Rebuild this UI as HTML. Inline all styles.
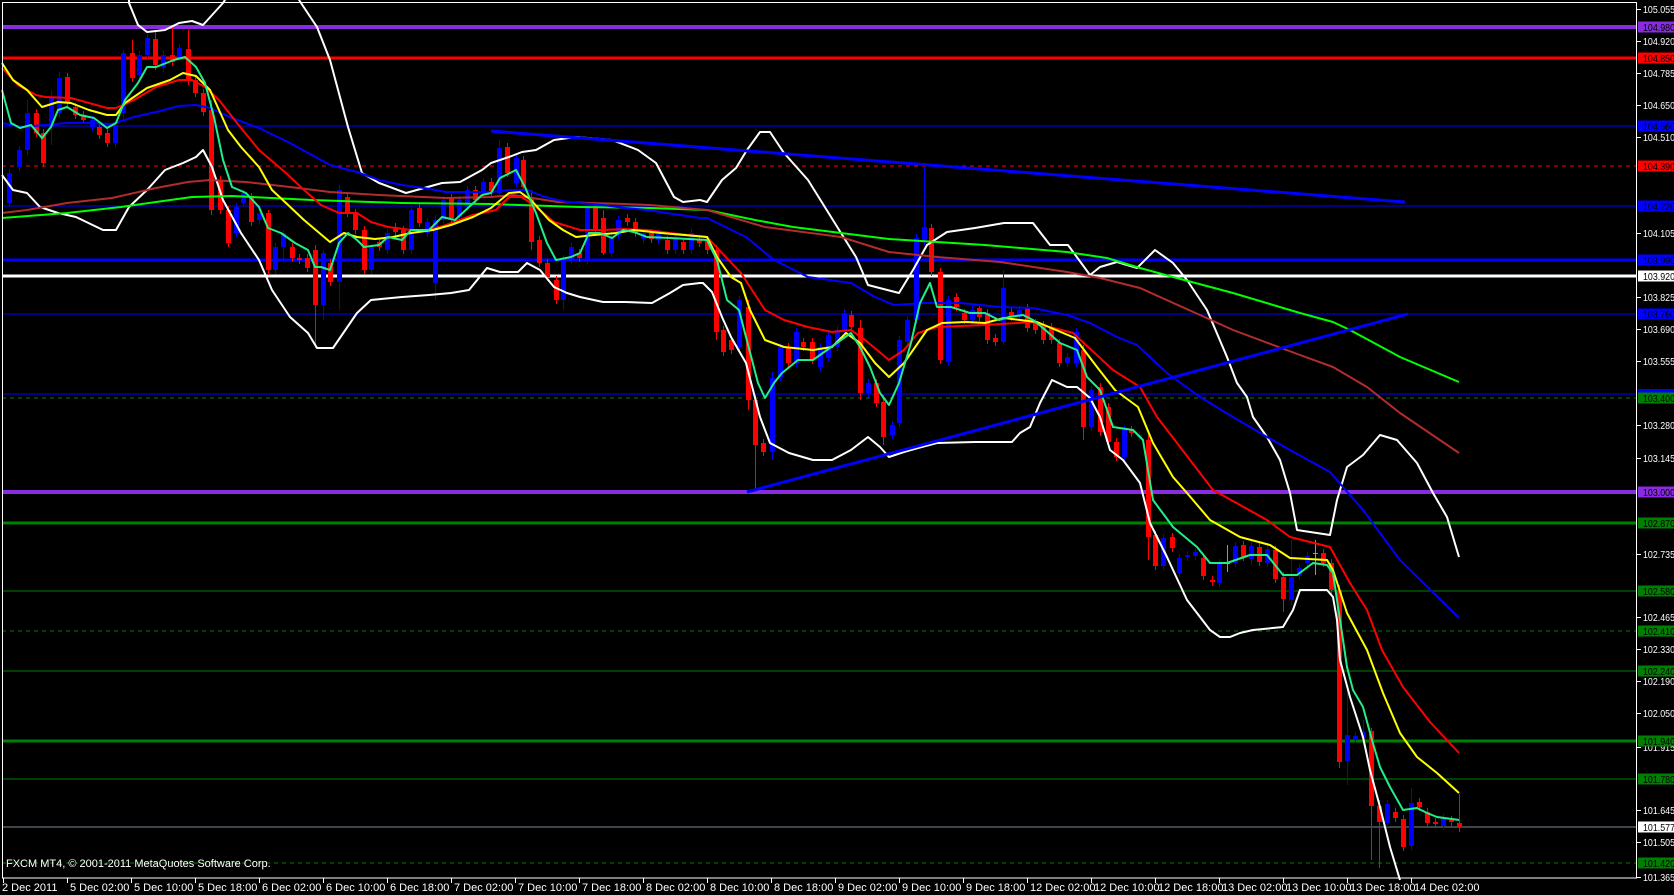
<!DOCTYPE html>
<html><head><meta charset="utf-8"><style>
html,body{margin:0;padding:0;background:#000;width:1674px;height:895px;overflow:hidden}
svg{display:block}
text{font-family:"Liberation Sans",sans-serif;font-size:11px;fill:#fff}
text.p{font-size:10.5px}
</style></head><body>
<svg id="s" width="1674" height="895" viewBox="0 0 1674 895" xmlns="http://www.w3.org/2000/svg">
<rect width="1674" height="895" fill="#000"/>
<g id="hl"></g>
<g id="cd"></g>
<g id="ma" fill="none" stroke-linejoin="round"></g>
<g id="ax"></g>
<text x="6" y="867">FXCM MT4, © 2001-2011 MetaQuotes Software Corp.</text>
</svg>
<script>
var NS="http://www.w3.org/2000/svg";
function el(p,t,a,txt){var e=document.createElementNS(NS,t);for(var k in a)e.setAttribute(k,a[k]);if(txt!=null)e.textContent=txt;document.getElementById(p).appendChild(e);return e;}
var H=[[27,"#8a2be2",4,0],[58,"#ff0000",3,0],[126,"#0000ff",1,0],[166,"#ff0000",1,1],[206,"#0000ff",1,0],[260,"#0000ff",3,0],[276,"#ffffff",3,0],[314,"#0000ff",1,0],[394,"#0000ff",1,0],[398,"#008000",1,1],[492,"#8a2be2",4,0],[523,"#008000",3,0],[591,"#008000",1,0],[631,"#008000",1,1],[671,"#008000",1,0],[741,"#008000",3,0],[779,"#008000",1,0],[827,"#778899",1,0],[863,"#008000",1,1]];
H.forEach(function(h){var a={x1:2,x2:1637,y1:h[0],y2:h[0],stroke:h[1],"stroke-width":h[2]};if(h[3])a["stroke-dasharray"]="4,4";el("hl","line",a);});
var C=[[9,173,203,'b'],[19,150,167,'b'],[27,113,150,'b'],[36,113,133,'r'],[43,133,163,'r'],[51,97,127,'b'],[59,78,113,'b'],[67,77,103,'r'],[75,107,115,'r'],[83,115,120,'r'],[92,120,127,'b'],[99,127,135,'r'],[107,133,143,'r'],[115,125,143,'b'],[123,53,113,'b'],[132,53,78,'r'],[139,55,75,'b'],[147,38,55,'b'],[155,39,65,'r'],[163,55,68,'b'],[172,55,62,'r'],[179,48,57,'b'],[188,49,80,'r'],[195,80,93,'r'],[203,93,112,'r'],[211,110,210,'r'],[220,180,210,'r'],[228,210,243,'r'],[236,207,233,'b'],[243,193,203,'b'],[251,197,222,'r'],[259,213,220,'b'],[268,213,270,'r'],[275,247,270,'b'],[283,233,247,'b'],[292,247,258,'r'],[299,258,260,'r'],[307,258,268,'r'],[315,250,305,'r'],[323,253,305,'b'],[330,263,282,'r'],[339,190,282,'b'],[347,197,213,'r'],[355,213,230,'r'],[364,230,270,'r'],[371,248,270,'b'],[379,242,247,'r'],[387,233,250,'b'],[395,227,232,'r'],[403,230,250,'r'],[411,210,250,'b'],[419,208,223,'r'],[427,222,233,'b'],[435,220,283,'b'],[443,200,220,'b'],[451,198,218,'r'],[459,200,217,'b'],[467,190,207,'b'],[475,190,200,'r'],[483,182,193,'b'],[491,182,193,'r'],[499,148,193,'b'],[507,147,173,'r'],[516,158,183,'b'],[523,160,187,'r'],[531,197,242,'r'],[539,240,263,'r'],[547,263,277,'r'],[556,280,300,'r'],[563,260,300,'b'],[571,247,260,'b'],[579,253,258,'r'],[587,208,260,'b'],[595,208,230,'r'],[603,218,253,'r'],[611,238,253,'b'],[618,220,235,'b'],[627,218,222,'r'],[635,222,233,'r'],[643,233,239,'b'],[651,233,239,'r'],[658,233,240,'b'],[667,240,250,'r'],[675,238,250,'b'],[683,242,250,'r'],[691,233,250,'b'],[699,240,243,'r'],[707,240,250,'r'],[716,250,332,'r'],[723,330,352,'r'],[731,340,350,'r'],[739,300,347,'b'],[748,307,400,'r'],[755,400,445,'r'],[763,443,452,'r'],[772,378,452,'b'],[780,347,377,'b'],[788,347,363,'r'],[796,332,363,'b'],[803,342,347,'r'],[812,342,360,'r'],[820,347,367,'b'],[828,335,358,'b'],[837,330,347,'b'],[844,313,330,'b'],[851,315,327,'r'],[860,328,393,'r'],[868,383,393,'b'],[876,383,403,'r'],[883,402,437,'r'],[892,425,435,'b'],[899,340,423,'b'],[907,320,342,'b'],[916,238,320,'b'],[924,227,240,'b'],[931,228,272,'r'],[940,272,360,'r'],[948,300,362,'b'],[956,297,307,'r'],[964,313,320,'r'],[972,310,320,'b'],[979,308,317,'r'],[987,313,340,'r'],[995,338,342,'r'],[1003,288,342,'b'],[1011,312,317,'r'],[1019,310,317,'b'],[1027,308,328,'r'],[1035,323,330,'r'],[1043,325,340,'r'],[1051,327,340,'r'],[1059,343,363,'r'],[1067,357,363,'b'],[1076,332,363,'b'],[1083,350,427,'r'],[1091,390,427,'b'],[1100,387,432,'r'],[1108,407,442,'r'],[1116,442,457,'r'],[1124,430,457,'b'],[1131,430,433,'r'],[1139,435,437,'b'],[1148,440,537,'r'],[1155,535,566,'r'],[1163,538,566,'b'],[1172,537,548,'r'],[1179,558,573,'b'],[1187,555,557,'b'],[1195,552,556,'b'],[1203,558,576,'r'],[1212,580,582,'r'],[1219,563,583,'b'],[1227,563,564,'g'],[1235,546,563,'b'],[1243,545,557,'r'],[1251,546,559,'b'],[1259,547,562,'r'],[1267,549,563,'b'],[1275,550,579,'r'],[1283,577,599,'r'],[1291,577,600,'b'],[1299,568,576,'b'],[1307,556,563,'b'],[1315,553,554,'g'],[1323,553,563,'r'],[1331,563,590,'r'],[1339,590,762,'r'],[1347,735,761,'b'],[1355,736,739,'b'],[1363,732,738,'b'],[1371,731,806,'r'],[1379,806,822,'r'],[1387,804,823,'b'],[1395,812,818,'r'],[1403,819,847,'r'],[1411,803,846,'b'],[1419,802,807,'r'],[1427,812,823,'r'],[1435,822,824,'r'],[1443,818,826,'b'],[1451,820,822,'r'],[1459,823,827,'r']];
var W={211:[100,215],315:[245,348],924:[167,245],755:[395,490],339:[185,310],435:[215,300],1339:[585,768],1347:[690,785],1363:[720,745],1371:[728,860],1379:[800,868],1411:[788,850],1459:[794,832],1300:[560,583],1291:[540,605],1283:[572,612],1227:[545,572],1315:[540,575],1251:[540,565],1148:[435,560],1083:[345,440],1003:[270,345],883:[395,445],860:[320,400],772:[372,460],748:[300,410],716:[245,340],499:[140,195],531:[190,250],563:[255,310],603:[210,255],283:[230,262],268:[210,275],323:[250,320],123:[50,120],132:[40,82],155:[30,70],172:[28,66],188:[30,85],27:[100,155],51:[90,145],59:[72,118]};
var col={b:"#0000ff",r:"#ff0000",g:"#00ff00"};
C.forEach(function(c){var x=c[0],t=c[1],b=c[2],k=col[c[3]];var w=W[x]||[t-4,b+4];
el("cd","line",{x1:x+0.5,x2:x+0.5,y1:w[0],y2:w[1],stroke:k,"stroke-width":1});
el("cd","rect",{x:x-2,y:t,width:5,height:Math.max(1,b-t),fill:k});});
function pl(pts,c,w){el("ma","polyline",{points:pts,stroke:c,"stroke-width":w});}
pl("129,-5 129,3 138,25 147,32 165,30 179,23 192,21 203,25 223,3 228,-5","#fff",2);
pl("296,-5 301,3 317,27 330,60 348,127 362,173 379,183 406,193 442,183 460,182 482,170 491,163 509,157 522,152 536,150 554,140 576,137 612,140 638,150 656,163 674,197 683,202 700,200 707,202 722,180 736,168 747,150 760,132 770,132 784,153 808,180 841,233 856,257 868,285 899,293 913,270 927,245 947,232 975,228 1004,223 1033,223 1050,245 1068,245 1090,275 1100,267 1117,262 1137,268 1155,250 1173,263 1187,280 1207,310 1227,357 1237,383 1247,397 1253,417 1267,437 1280,460 1290,493 1297,530 1330,535 1337,500 1347,467 1363,455 1380,435 1397,440 1417,463 1433,493 1447,517 1459,557","#fff",2);
pl("2,175 13,190 27,193 40,207 58,213 76,217 103,230 116,230 129,207 147,190 165,170 183,163 196,157 203,150 212,167 223,200 241,233 259,260 272,290 290,317 308,333 317,348 333,348 357,313 371,300 402,297 429,295 451,293 469,290 487,268 500,272 518,272 527,263 540,270 554,287 567,293 580,297 603,302 625,302 652,303 670,293 683,285 700,283 703,283 712,292 722,317 731,337 746,363 760,417 770,443 789,453 813,460 832,460 851,450 868,437 880,447 889,457 904,452 918,448 937,443 975,442 1012,442 1020,433 1030,427 1040,403 1052,380 1067,387 1077,387 1090,398 1100,417 1110,450 1123,460 1140,483 1150,523 1167,557 1187,600 1210,630 1220,637 1230,637 1240,633 1253,630 1283,627 1293,610 1300,590 1327,590 1333,597 1337,620 1340,660 1350,697 1363,737 1370,770 1380,807 1390,847 1400,880","#fff",2);
pl("2,218 67,213 121,207 156,202 192,197 232,196 312,200 402,203 491,204 580,207 650,208 707,210 755,220 793,227 889,239 985,245 1067,252 1107,258 1140,268 1173,277 1233,293 1300,313 1333,322 1350,330 1400,357 1459,382","#00ff00",2);
pl("2,213 27,210 67,203 112,198 156,188 188,182 210,180 246,182 290,187 330,192 379,195 446,198 491,197 513,195 558,202 625,204 650,205 707,210 765,227 841,237 889,252 937,257 1000,262 1067,272 1100,278 1140,288 1200,315 1233,330 1300,355 1333,367 1367,387 1400,413 1459,453","#b22c2c",2);
pl("2,123 22,127 45,125 67,123 89,123 112,124 134,117 156,112 179,106 196,105 210,108 232,118 259,128 290,143 330,165 357,172 379,180 402,185 424,188 446,192 491,192 509,190 527,190 545,197 567,202 603,205 625,208 647,210 700,218 707,218 746,237 774,260 808,277 851,283 875,297 894,305 923,303 961,303 1000,307 1033,308 1067,315 1090,323 1117,337 1137,345 1167,373 1200,397 1233,417 1267,437 1290,450 1330,472 1363,510 1400,560 1459,618","#0000ff",2);
pl("2,68 18,85 36,95 45,97 71,98 89,103 107,108 116,108 134,100 156,87 179,80 192,80 205,87 219,100 237,123 259,150 286,173 304,190 321,205 339,213 357,213 371,222 388,227 411,230 429,230 446,225 473,215 496,210 509,197 522,197 536,207 554,222 580,230 603,230 625,229 647,230 670,233 707,237 722,253 741,273 765,310 784,320 808,327 832,332 851,330 865,340 889,360 904,350 918,333 937,327 985,325 1033,322 1050,327 1073,333 1113,370 1140,387 1157,417 1177,443 1213,490 1267,520 1290,537 1330,547 1350,583 1367,610 1382,650 1403,687 1430,722 1459,753","#ff0000",2);
pl("2,63 13,80 27,90 42,107 58,102 71,103 89,110 107,115 116,115 125,103 147,88 170,80 183,73 196,76 210,90 219,110 228,130 241,147 259,167 272,190 286,203 304,220 330,242 344,233 357,237 375,239 393,237 411,233 433,230 451,225 473,217 491,208 509,193 520,192 531,200 549,220 563,230 576,237 594,235 616,233 634,230 661,233 707,237 717,257 731,277 741,283 750,310 765,340 784,347 813,350 832,347 846,333 860,343 875,363 889,377 904,363 918,343 927,330 942,323 966,322 985,323 1004,318 1037,322 1075,338 1097,367 1115,390 1138,407 1153,443 1173,477 1187,493 1210,520 1240,537 1270,545 1290,558 1327,560 1333,570 1347,613 1367,650 1383,693 1400,733 1417,757 1437,773 1459,793","#ffff00",2);
pl("2,90 11,123 20,128 31,125 42,138 51,127 58,110 67,107 80,115 94,118 107,128 116,123 125,100 138,83 147,67 156,67 174,60 185,57 196,67 205,83 214,117 223,160 232,187 246,193 259,207 268,228 281,233 295,243 308,250 315,267 321,267 330,270 339,243 348,233 357,240 364,247 379,245 388,237 402,240 411,230 429,230 442,217 455,220 469,207 482,195 491,193 500,178 516,170 525,187 536,213 547,243 556,260 571,257 580,253 589,233 600,233 612,238 623,230 634,232 647,237 670,238 707,240 717,260 727,300 739,310 746,337 758,383 765,398 774,383 782,373 798,360 813,360 827,350 841,340 851,333 860,347 870,367 880,393 889,405 899,383 911,343 920,303 930,283 937,307 951,307 970,313 985,313 999,320 1009,317 1023,315 1033,320 1043,328 1060,343 1077,350 1087,377 1100,390 1113,427 1133,430 1143,440 1153,500 1173,527 1197,547 1210,563 1227,563 1250,555 1267,555 1283,575 1297,575 1313,563 1327,565 1333,573 1337,600 1342,633 1347,667 1353,690 1363,707 1372,740 1380,767 1390,787 1403,810 1417,808 1427,813 1437,817 1459,820","#22ee88",2);
el("ma","line",{x1:491,y1:131,x2:1405,y2:202,stroke:"#0000ff","stroke-width":3});
el("ma","line",{x1:747,y1:492,x2:1408,y2:314,stroke:"#0000ff","stroke-width":3});
el("ax","rect",{x:2.5,y:2.5,width:1634,height:875.5,fill:"none",stroke:"#fff","stroke-width":1});
var P=[["105.055",9],["104.920",41],["104.785",73],["104.650",105],["104.510",137],["104.105",233],["103.825",297],["103.690",329],["103.555",361],["103.280",425],["103.145",458],["102.735",554],["102.465",617],["102.330",649],["102.190",681],["102.050",713],["101.915",747],["101.645",810],["101.505",842],["101.365",877]];
P.forEach(function(p){el("ax","line",{x1:1637,x2:1641,y1:p[1]+.5,y2:p[1]+.5,stroke:"#fff"});el("ax","text",{x:1643,y:p[1]+4,"class":"p",textLength:32,lengthAdjust:"spacingAndGlyphs"},p[0]);});
var L=[["104.980",27,"#8a2be2"],["104.850",58,"#ff0000"],["104.560",126,"#0000ff"],["104.390",166,"#ff0000"],["104.220",206,"#0000ff"],["103.990",260,"#0000ff"],["103.920",276,"#ffffff"],["103.760",314,"#0000ff"],["103.400",398,"#008000"],["103.000",492,"#8a2be2"],["102.870",523,"#008000"],["102.580",591,"#008000"],["102.410",631,"#008000"],["102.240",671,"#008000"],["101.940",741,"#008000"],["101.780",779,"#008000"],["101.577",827,"#ffffff"],["101.420",863,"#008000"]];
el("ax","rect",{x:1638,y:389,width:36,height:6,fill:"#0000ff"});
L.forEach(function(l){el("ax","rect",{x:1638,y:l[1]-5.5,width:36,height:11,fill:l[2]});el("ax","text",{x:1643,y:l[1]+4,"class":"p",style:"fill:#000",textLength:32,lengthAdjust:"spacingAndGlyphs"},l[0]);});
var T=["2 Dec 2011","5 Dec 02:00","5 Dec 10:00","5 Dec 18:00","6 Dec 02:00","6 Dec 10:00","6 Dec 18:00","7 Dec 02:00","7 Dec 10:00","7 Dec 18:00","8 Dec 02:00","8 Dec 10:00","8 Dec 18:00","9 Dec 02:00","9 Dec 10:00","9 Dec 18:00","12 Dec 02:00","12 Dec 10:00","12 Dec 18:00","13 Dec 02:00","13 Dec 10:00","13 Dec 18:00","14 Dec 02:00"];
T.forEach(function(t,i){var x=Math.round(3+64*i);el("ax","line",{x1:x+.5,x2:x+.5,y1:878,y2:883,stroke:"#fff"});el("ax","text",{x:(i==0?2:x+3),y:891},t);});
</script>
</body></html>
